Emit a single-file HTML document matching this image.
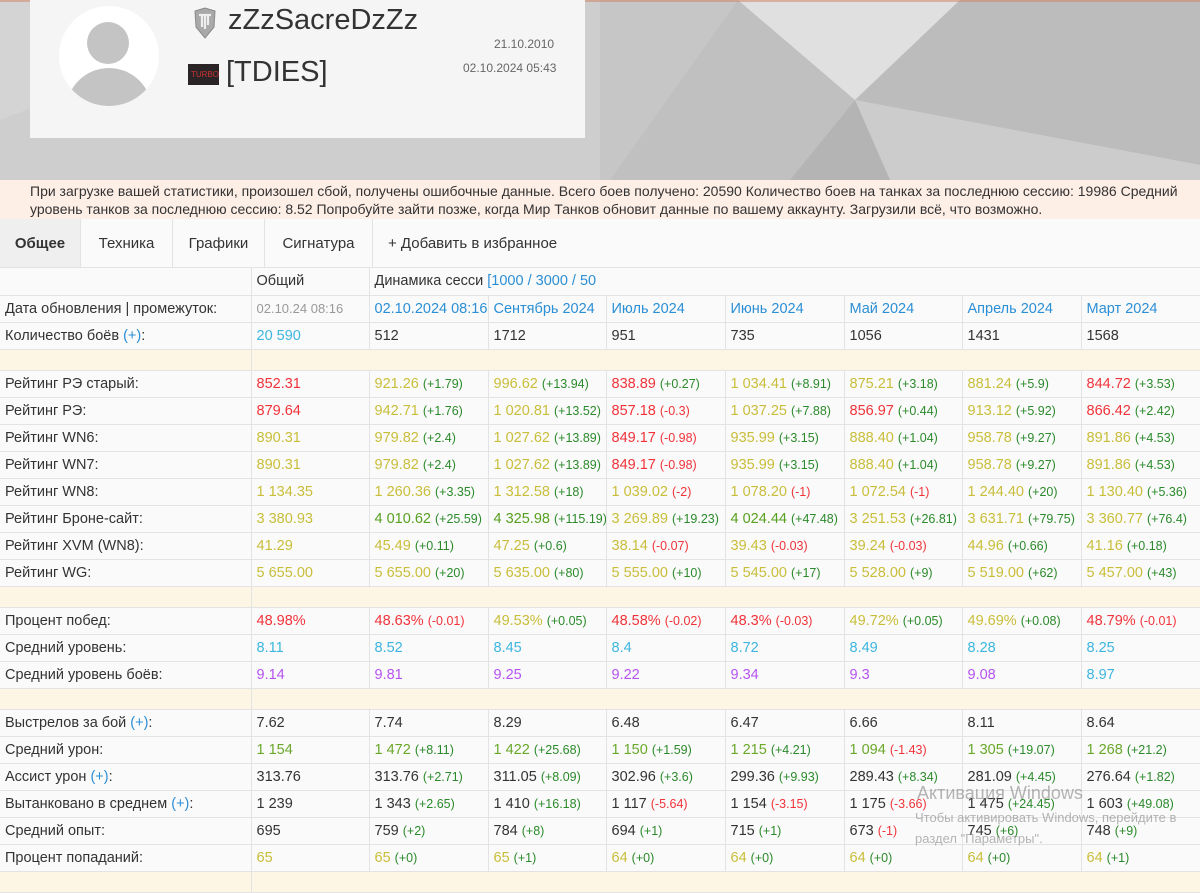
<!DOCTYPE html>
<html><head><meta charset="utf-8">
<style>
*{margin:0;padding:0;box-sizing:border-box}
body{width:1200px;height:873px;overflow:hidden;font-family:"Liberation Sans",sans-serif;background:#fafafa;color:#333;position:relative}
#hdr{position:absolute;left:0;top:0;width:1200px;height:180px;background:#c8c8c8;overflow:hidden}
#card{position:absolute;left:30px;top:0;width:555px;height:138px;background:#f5f5f5}
#err{position:absolute;left:0;top:180px;width:1200px;height:39px;background:#fdeee6;font-size:14px;line-height:18px;padding:2px 30px;white-space:nowrap;color:#333}
#tabs{position:absolute;left:0;top:219px;width:1200px;height:49px;background:#fafafa;border-bottom:1px solid #e3e3e3;font-size:15px}
#tabs div{position:absolute;top:0;height:48px;line-height:50px;border-right:1px solid #e3e3e3;text-align:center}
table{position:absolute;left:0;top:268px;border-collapse:collapse;table-layout:fixed;width:1200px;font-size:14.5px}
td{height:27px;border:1px solid #e3e3e3;padding:0 5px;white-space:nowrap;overflow:hidden;background:#fafafa}
tr.sp td{height:21px;background:#fdf6e4}
tr:first-child td{border-top:none}
td:first-child{border-left:none}
small{font-size:12.5px}
.r{color:#f0333a}.y{color:#c9be3a}.g{color:#6aa82a}.gg{color:#2b8a2b}.c{color:#3cb6de}.p{color:#b653f0}.b{color:#2b8fd6}.gr{color:#999;font-size:13px}.G{color:#58a020}
</style></head><body>
<div id="hdr">
<svg width="1200" height="180" style="position:absolute;left:0;top:0">
<rect width="1200" height="180" fill="#cbcbcb"/>
<polygon points="0,0 320,0 0,120" fill="#d4d4d4"/>
<polygon points="0,120 320,0 600,0 600,180 0,180" fill="#cecece"/>
<polygon points="600,0 738,0 610,180 600,180" fill="#c6c6c6"/>
<polygon points="738,0 855,100 790,180 610,180" fill="#c0c0c0"/>
<polygon points="738,0 960,0 855,100" fill="#e0e0e0"/>
<polygon points="960,0 1200,0 1200,165 855,100" fill="#bcbcbc"/>
<polygon points="855,100 1200,165 1200,180 890,180" fill="#cccccc"/>
<polygon points="855,100 790,180 890,180" fill="#b4b4b4"/>
<line x1="0" y1="1" x2="1200" y2="1" stroke="#d08060" stroke-width="1"/>
</svg>
<div id="card">
 <div style="position:absolute;left:29px;top:6px;width:100px;height:100px;border-radius:50%;background:#fff;overflow:hidden">
  <div style="position:absolute;left:28px;top:16px;width:42px;height:42px;border-radius:50%;background:#c4c4c4"></div>
  <div style="position:absolute;left:7px;top:62px;width:86px;height:60px;border-radius:43px 43px 0 0;background:#c4c4c4"></div>
 </div>
 <svg style="position:absolute;left:163px;top:7px" width="24" height="32" viewBox="0 0 24 32"><path d="M2 4 L12 1 L22 4 L21 20 L12 31 L3 20 Z" fill="#a9a9a9" stroke="#8a8a8a"/><path d="M6 8h12M9 8v12M15 8v10M12 8v14" stroke="#eee" stroke-width="2.2" fill="none"/></svg>
 <div style="position:absolute;left:198px;top:4px;font-size:29px;color:#333">zZzSacreDzZz</div>
 <div style="position:absolute;left:158px;top:64px;width:31px;height:21px;background:#2a2426"><span style="color:#c33;font-size:8px;position:absolute;left:3px;top:6px">TURBO</span></div>
 <div style="position:absolute;left:196px;top:56px;font-size:29px;color:#333">[TDIES]</div>
 <div style="position:absolute;left:464px;top:37px;font-size:12px;color:#666">21.10.2010</div>
 <div style="position:absolute;left:433px;top:61px;font-size:12px;color:#666">02.10.2024 05:43</div>
</div>
</div>
<div id="err">При загрузке вашей статистики, произошел сбой, получены ошибочные данные. Всего боев получено: 20590 Количество боев на танках за последнюю сессию: 19986 Средний<br>уровень танков за последнюю сессию: 8.52 Попробуйте зайти позже, когда Мир Танков обновит данные по вашему аккаунту. Загрузили всё, что возможно.</div>
<div id="tabs">
<div style="left:0;width:81px;background:#efefef;font-weight:bold">Общее</div>
<div style="left:81px;width:92px">Техника</div>
<div style="left:173px;width:92px">Графики</div>
<div style="left:265px;width:108px">Сигнатура</div>
<div style="left:373px;width:210px;border:none;text-align:left;padding-left:15px">+ Добавить в избранное</div>
</div>
<table>
<colgroup><col style="width:251px"><col style="width:118px"><col style="width:119px"><col style="width:118px"><col style="width:119px"><col style="width:119px"><col style="width:118px"><col style="width:119px"><col style="width:119px"></colgroup>
<tr><td style="border-right:none"></td><td style="border-left:1px solid #e3e3e3">Общий</td><td colspan="7" style="border-left:1px solid #e3e3e3">Динамика сесси <span class="b">[1000 / 3000 / 50</span></td></tr>
<tr><td>Дата обновления | промежуток:</td><td class="gr">02.10.24 08:16</td><td class="b">02.10.2024 08:16</td><td class="b">Сентябрь 2024</td><td class="b">Июль 2024</td><td class="b">Июнь 2024</td><td class="b">Май 2024</td><td class="b">Апрель 2024</td><td class="b">Март 2024</td></tr>
<tr><td>Количество боёв <span class="b">(+)</span>:</td><td class="c">20 590</td><td>512</td><td>1712</td><td>951</td><td>735</td><td>1056</td><td>1431</td><td>1568</td></tr>
<tr class="sp"><td></td><td colspan="8"></td></tr>
<tr><td>Рейтинг РЭ старый:</td><td class="r">852.31</td><td><span class="y">921.26</span> <small class="gg">(+1.79)</small></td><td><span class="y">996.62</span> <small class="gg">(+13.94)</small></td><td><span class="r">838.89</span> <small class="gg">(+0.27)</small></td><td><span class="y">1 034.41</span> <small class="gg">(+8.91)</small></td><td><span class="y">875.21</span> <small class="gg">(+3.18)</small></td><td><span class="y">881.24</span> <small class="gg">(+5.9)</small></td><td><span class="r">844.72</span> <small class="gg">(+3.53)</small></td></tr>
<tr><td>Рейтинг РЭ:</td><td class="r">879.64</td><td><span class="y">942.71</span> <small class="gg">(+1.76)</small></td><td><span class="y">1 020.81</span> <small class="gg">(+13.52)</small></td><td><span class="r">857.18</span> <small class="r">(-0.3)</small></td><td><span class="y">1 037.25</span> <small class="gg">(+7.88)</small></td><td><span class="r">856.97</span> <small class="gg">(+0.44)</small></td><td><span class="y">913.12</span> <small class="gg">(+5.92)</small></td><td><span class="r">866.42</span> <small class="gg">(+2.42)</small></td></tr>
<tr><td>Рейтинг WN6:</td><td class="y">890.31</td><td><span class="y">979.82</span> <small class="gg">(+2.4)</small></td><td><span class="y">1 027.62</span> <small class="gg">(+13.89)</small></td><td><span class="r">849.17</span> <small class="r">(-0.98)</small></td><td><span class="y">935.99</span> <small class="gg">(+3.15)</small></td><td><span class="y">888.40</span> <small class="gg">(+1.04)</small></td><td><span class="y">958.78</span> <small class="gg">(+9.27)</small></td><td><span class="y">891.86</span> <small class="gg">(+4.53)</small></td></tr>
<tr><td>Рейтинг WN7:</td><td class="y">890.31</td><td><span class="y">979.82</span> <small class="gg">(+2.4)</small></td><td><span class="y">1 027.62</span> <small class="gg">(+13.89)</small></td><td><span class="r">849.17</span> <small class="r">(-0.98)</small></td><td><span class="y">935.99</span> <small class="gg">(+3.15)</small></td><td><span class="y">888.40</span> <small class="gg">(+1.04)</small></td><td><span class="y">958.78</span> <small class="gg">(+9.27)</small></td><td><span class="y">891.86</span> <small class="gg">(+4.53)</small></td></tr>
<tr><td>Рейтинг WN8:</td><td class="y">1 134.35</td><td><span class="y">1 260.36</span> <small class="gg">(+3.35)</small></td><td><span class="y">1 312.58</span> <small class="gg">(+18)</small></td><td><span class="y">1 039.02</span> <small class="r">(-2)</small></td><td><span class="y">1 078.20</span> <small class="r">(-1)</small></td><td><span class="y">1 072.54</span> <small class="r">(-1)</small></td><td><span class="y">1 244.40</span> <small class="gg">(+20)</small></td><td><span class="y">1 130.40</span> <small class="gg">(+5.36)</small></td></tr>
<tr><td>Рейтинг Броне-сайт:</td><td class="y">3 380.93</td><td><span class="G">4 010.62</span> <small class="gg">(+25.59)</small></td><td><span class="G">4 325.98</span> <small class="gg">(+115.19)</small></td><td><span class="y">3 269.89</span> <small class="gg">(+19.23)</small></td><td><span class="G">4 024.44</span> <small class="gg">(+47.48)</small></td><td><span class="y">3 251.53</span> <small class="gg">(+26.81)</small></td><td><span class="y">3 631.71</span> <small class="gg">(+79.75)</small></td><td><span class="y">3 360.77</span> <small class="gg">(+76.4)</small></td></tr>
<tr><td>Рейтинг XVM (WN8):</td><td class="y">41.29</td><td><span class="y">45.49</span> <small class="gg">(+0.11)</small></td><td><span class="y">47.25</span> <small class="gg">(+0.6)</small></td><td><span class="y">38.14</span> <small class="r">(-0.07)</small></td><td><span class="y">39.43</span> <small class="r">(-0.03)</small></td><td><span class="y">39.24</span> <small class="r">(-0.03)</small></td><td><span class="y">44.96</span> <small class="gg">(+0.66)</small></td><td><span class="y">41.16</span> <small class="gg">(+0.18)</small></td></tr>
<tr><td>Рейтинг WG:</td><td class="y">5 655.00</td><td><span class="y">5 655.00</span> <small class="gg">(+20)</small></td><td><span class="y">5 635.00</span> <small class="gg">(+80)</small></td><td><span class="y">5 555.00</span> <small class="gg">(+10)</small></td><td><span class="y">5 545.00</span> <small class="gg">(+17)</small></td><td><span class="y">5 528.00</span> <small class="gg">(+9)</small></td><td><span class="y">5 519.00</span> <small class="gg">(+62)</small></td><td><span class="y">5 457.00</span> <small class="gg">(+43)</small></td></tr>
<tr class="sp"><td></td><td colspan="8"></td></tr>
<tr><td>Процент побед:</td><td class="r">48.98%</td><td><span class="r">48.63%</span> <small class="r">(-0.01)</small></td><td><span class="y">49.53%</span> <small class="gg">(+0.05)</small></td><td><span class="r">48.58%</span> <small class="r">(-0.02)</small></td><td><span class="r">48.3%</span> <small class="r">(-0.03)</small></td><td><span class="y">49.72%</span> <small class="gg">(+0.05)</small></td><td><span class="y">49.69%</span> <small class="gg">(+0.08)</small></td><td><span class="r">48.79%</span> <small class="r">(-0.01)</small></td></tr>
<tr><td>Средний уровень:</td><td class="c">8.11</td><td class="c">8.52</td><td class="c">8.45</td><td class="c">8.4</td><td class="c">8.72</td><td class="c">8.49</td><td class="c">8.28</td><td class="c">8.25</td></tr>
<tr><td>Средний уровень боёв:</td><td class="p">9.14</td><td class="p">9.81</td><td class="p">9.25</td><td class="p">9.22</td><td class="p">9.34</td><td class="p">9.3</td><td class="p">9.08</td><td class="c">8.97</td></tr>
<tr class="sp"><td></td><td colspan="8"></td></tr>
<tr><td>Выстрелов за бой <span class="b">(+)</span>:</td><td>7.62</td><td>7.74</td><td>8.29</td><td>6.48</td><td>6.47</td><td>6.66</td><td>8.11</td><td>8.64</td></tr>
<tr><td>Средний урон:</td><td class="g">1 154</td><td><span class="g">1 472</span> <small class="gg">(+8.11)</small></td><td><span class="g">1 422</span> <small class="gg">(+25.68)</small></td><td><span class="g">1 150</span> <small class="gg">(+1.59)</small></td><td><span class="g">1 215</span> <small class="gg">(+4.21)</small></td><td><span class="g">1 094</span> <small class="r">(-1.43)</small></td><td><span class="g">1 305</span> <small class="gg">(+19.07)</small></td><td><span class="g">1 268</span> <small class="gg">(+21.2)</small></td></tr>
<tr><td>Ассист урон <span class="b">(+)</span>:</td><td>313.76</td><td>313.76 <small class="gg">(+2.71)</small></td><td>311.05 <small class="gg">(+8.09)</small></td><td>302.96 <small class="gg">(+3.6)</small></td><td>299.36 <small class="gg">(+9.93)</small></td><td>289.43 <small class="gg">(+8.34)</small></td><td>281.09 <small class="gg">(+4.45)</small></td><td>276.64 <small class="gg">(+1.82)</small></td></tr>
<tr><td>Вытанковано в среднем <span class="b">(+)</span>:</td><td>1 239</td><td>1 343 <small class="gg">(+2.65)</small></td><td>1 410 <small class="gg">(+16.18)</small></td><td>1 117 <small class="r">(-5.64)</small></td><td>1 154 <small class="r">(-3.15)</small></td><td>1 175 <small class="r">(-3.66)</small></td><td>1 475 <small class="gg">(+24.45)</small></td><td>1 603 <small class="gg">(+49.08)</small></td></tr>
<tr><td>Средний опыт:</td><td>695</td><td>759 <small class="gg">(+2)</small></td><td>784 <small class="gg">(+8)</small></td><td>694 <small class="gg">(+1)</small></td><td>715 <small class="gg">(+1)</small></td><td>673 <small class="r">(-1)</small></td><td>745 <small class="gg">(+6)</small></td><td>748 <small class="gg">(+9)</small></td></tr>
<tr><td>Процент попаданий:</td><td class="y">65</td><td><span class="y">65</span> <small class="gg">(+0)</small></td><td><span class="y">65</span> <small class="gg">(+1)</small></td><td><span class="y">64</span> <small class="gg">(+0)</small></td><td><span class="y">64</span> <small class="gg">(+0)</small></td><td><span class="y">64</span> <small class="gg">(+0)</small></td><td><span class="y">64</span> <small class="gg">(+0)</small></td><td><span class="y">64</span> <small class="gg">(+1)</small></td></tr>
<tr class="sp"><td></td><td colspan="8"></td></tr>
</table>
<div style="position:absolute;left:917px;top:783px;font-size:18px;color:rgba(120,120,120,0.55)">Активация Windows</div>
<div style="position:absolute;left:915px;top:807px;font-size:13px;line-height:21px;color:rgba(120,120,120,0.55)">Чтобы активировать Windows, перейдите в<br>раздел "Параметры".</div>
</body></html>
